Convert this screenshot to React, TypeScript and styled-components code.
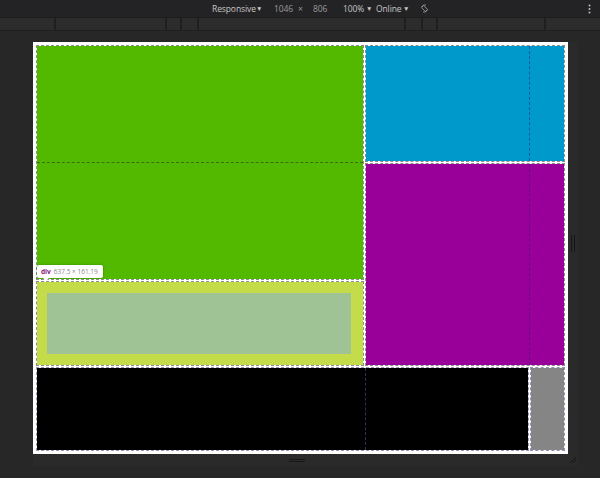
import React from 'react';
import styled, { createGlobalStyle } from 'styled-components';

const GlobalStyle = createGlobalStyle`
  html, body {
    margin: 0;
    padding: 0;
    background: #272727;
    overflow: hidden;
  }
  body {
    font-family: "Open Sans", "Noto Sans", sans-serif;
  }
`;

const Shell = styled.div`
  width: 600px;
  height: 478px;
  display: flex;
  flex-direction: column;
  background: #272727;
`;

const Toolbar = styled.div`
  height: 17px;
  flex: none;
  display: flex;
  align-items: center;
  padding-left: 212px;
  background: #232325;
  border-bottom: 1px solid #1d1d1f;
  color: #c6c6c6;
  font-size: 8.5px;
  letter-spacing: -0.1px;
`;

const ToolText = styled.span<{ $w: number; $dim?: boolean }>`
  flex: none;
  width: ${p => p.$w}px;
  color: ${p => (p.$dim ? '#9a9a9a' : '#c6c6c6')};
  white-space: nowrap;
  line-height: 17px;
`;

const Caret = styled.span<{ $w: number }>`
  flex: none;
  width: ${p => p.$w}px;
  font-size: 6.5px;
  line-height: 17px;
  color: #c6c6c6;
`;

const Kebab = styled.span`
  margin-left: auto;
  margin-right: 9px;
  display: flex;
  align-items: center;
`;

const MediaBar = styled.div`
  height: 12px;
  flex: none;
  display: flex;
  gap: 2px;
  background: #1f1f20;
  border-bottom: 1px solid #1f1f20;
`;

const MediaSegment = styled.div<{ $w: number }>`
  width: ${p => p.$w}px;
  flex: none;
  background: #2c2c2d;
`;

const Canvas = styled.div`
  flex: 1;
  padding: 11px 0 0 33px;
  background: #272727;
`;

const Stage = styled.div`
  display: grid;
  grid-template-columns: 535px 10px;
  grid-template-rows: 412px 12px;
`;

const Frame = styled.div`
  background: #ffffff;
  padding: 4px;
`;

const LayoutGrid = styled.div`
  display: grid;
  grid-template-columns: 326px 162px 33px;
  grid-template-rows: 115px 115px 83px 82px;
  gap: 3px;
  grid-template-areas:
    "main side side"
    "main tall tall"
    "pad tall tall"
    "foot foot aside";
`;

const Cell = styled.div<{
  $area: string;
  $bg: string;
  $hLine?: number;
  $vLine?: number;
  $lineColor?: string;
  $edge?: string;
}>`
  grid-area: ${p => p.$area};
  position: relative;
  background: ${p => p.$bg};
  outline: 1px dashed ${p => p.$edge || '#8c8c8c'};
  outline-offset: 0;

  &::after {
    content: '';
    position: absolute;
    display: ${p => (p.$hLine !== undefined || p.$vLine !== undefined ? 'block' : 'none')};
    ${p =>
      p.$hLine !== undefined
        ? `left: 0; right: 0; top: ${p.$hLine}px; border-top: 1px dashed ${p.$lineColor};`
        : ''}
    ${p =>
      p.$vLine !== undefined
        ? `top: 0; bottom: 0; left: ${p.$vLine}px; border-left: 1px dashed ${p.$lineColor};`
        : ''}
  }
`;

const PaddingBox = styled.div`
  grid-area: pad;
  position: relative;
  background: #c4dc4a;
  padding: 11px 12px 11px 10px;
  outline: 1px dashed #8c8c8c;
`;

const ContentBox = styled.div`
  height: 100%;
  background: #9fc394;
`;

const Tooltip = styled.div`
  position: absolute;
  left: 0;
  bottom: calc(100% + 4px);
  height: 13px;
  display: flex;
  align-items: center;
  gap: 3px;
  padding: 0 5px 0 4px;
  background: #ffffff;
  border-radius: 2px;
  box-shadow: 0 0 2px rgba(0, 0, 0, 0.35);
  font-size: 6.5px;
  white-space: nowrap;
  z-index: 2;

  &::after {
    content: '';
    position: absolute;
    left: 6px;
    top: 100%;
    border-left: 3px solid transparent;
    border-right: 3px solid transparent;
    border-top: 3px solid #ffffff;
  }
`;

const TagName = styled.span`
  color: #881280;
  font-weight: 700;
`;

const Dims = styled.span`
  color: #8a8a8a;
`;

const RightHandle = styled.div`
  background: #2a2a2b;
  display: flex;
  align-items: center;
  justify-content: center;
  gap: 2px;
  padding-bottom: 10px;
`;

const VBar = styled.span`
  width: 1px;
  height: 17px;
  background: #161617;
`;

const BottomHandle = styled.div`
  background: #2a2a2b;
  display: flex;
  flex-direction: column;
  align-items: center;
  justify-content: center;
  gap: 1px;
  padding-right: 8px;
`;

const HBar = styled.span`
  width: 16px;
  height: 1px;
  background: #161617;
`;

const Corner = styled.div`
  background: #2a2a2b;
  display: flex;
  align-items: center;
  justify-content: center;
`;

const RotateIcon = () => (
  <svg width="9" height="9" viewBox="0 0 12 12" fill="none" stroke="#a8a8a8" strokeWidth="1">
    <path d="M2.2 4.2 A4.3 4.3 0 0 1 8 1.6" />
    <path d="M9.8 7.8 A4.3 4.3 0 0 1 4 10.4" />
    <rect x="4" y="2.2" width="4" height="7.6" rx="0.6" transform="rotate(-45 6 6)" />
  </svg>
);

const KebabIcon = () => (
  <svg width="3" height="10" viewBox="0 0 3 10" fill="#bdbdbd">
    <circle cx="1.5" cy="1.5" r="1" />
    <circle cx="1.5" cy="5" r="1" />
    <circle cx="1.5" cy="8.5" r="1" />
  </svg>
);

const CornerIcon = () => (
  <svg width="8" height="8" viewBox="0 0 8 8" stroke="#151516" strokeWidth="1">
    <line x1="1" y1="7" x2="7" y2="1" />
    <line x1="4" y1="7" x2="7" y2="4" />
  </svg>
);

const segments = [54, 109, 13, 15, 205, 15, 13, 106, 54];

export default function App() {
  return (
    <Shell>
      <GlobalStyle />
      <Toolbar>
        <ToolText $w={44}>Responsive</ToolText>
        <Caret $w={18}>▼</Caret>
        <ToolText $w={24} $dim>1046</ToolText>
        <ToolText $w={15} $dim>×</ToolText>
        <ToolText $w={30} $dim>806</ToolText>
        <ToolText $w={23}>100%</ToolText>
        <Caret $w={10}>▼</Caret>
        <ToolText $w={27}>Online</ToolText>
        <Caret $w={17}>▼</Caret>
        <RotateIcon />
        <Kebab>
          <KebabIcon />
        </Kebab>
      </Toolbar>
      <MediaBar>
        {segments.map((w, i) => (
          <MediaSegment key={i} $w={w} />
        ))}
      </MediaBar>
      <Canvas>
        <Stage>
          <Frame>
            <LayoutGrid>
              <Cell $area="main" $bg="#52b800" $hLine={116} $lineColor="rgba(40,60,20,0.6)" />
              <Cell $area="side" $bg="#0099cc" $vLine={163} $lineColor="rgba(20,50,120,0.6)" />
              <Cell $area="tall" $bg="#990099" $vLine={163} $lineColor="rgba(70,20,110,0.6)" />
              <PaddingBox>
                <Tooltip>
                  <TagName>div</TagName>
                  <Dims>637.5 × 161.19</Dims>
                </Tooltip>
                <ContentBox />
              </PaddingBox>
              <Cell $area="foot" $bg="#000000" $vLine={328} $lineColor="rgba(70,70,120,0.7)" $edge="#a195b8" />
              <Cell $area="aside" $bg="#858585" $edge="#9a8fb4" />
            </LayoutGrid>
          </Frame>
          <RightHandle>
            <VBar />
            <VBar />
          </RightHandle>
          <BottomHandle>
            <HBar />
            <HBar />
          </BottomHandle>
          <Corner>
            <CornerIcon />
          </Corner>
        </Stage>
      </Canvas>
    </Shell>
  );
}
